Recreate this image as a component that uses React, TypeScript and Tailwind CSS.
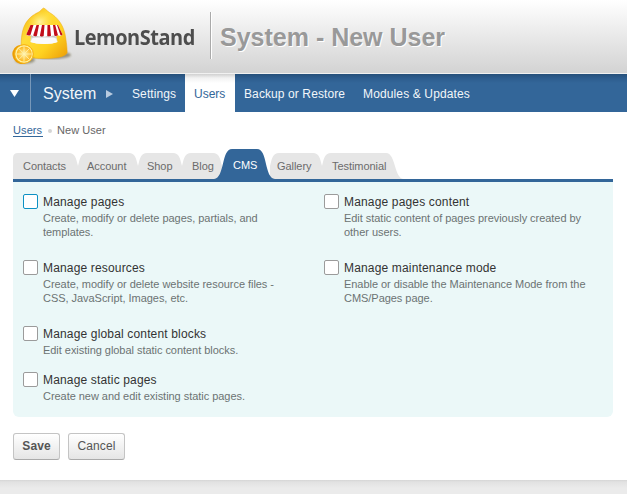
import React from "react";

function Logo() {
  return (
    <svg className="h-[62px] w-[64px] shrink-0" viewBox="10 5 64 62">
      <defs>
        <linearGradient id="dome" x1="0" y1="0" x2="1" y2="1">
          <stop offset="0" stopColor="#f3ae05" />
          <stop offset="0.35" stopColor="#ffdc3a" />
          <stop offset="0.65" stopColor="#ffd322" />
          <stop offset="1" stopColor="#ec9d05" />
        </linearGradient>
        <radialGradient id="glow" cx="0.42" cy="0.35" r="0.3">
          <stop offset="0" stopColor="#fff29c" />
          <stop offset="1" stopColor="#ffe14a" stopOpacity="0" />
        </radialGradient>
        <linearGradient id="counter" x1="0" y1="0" x2="0" y2="1">
          <stop offset="0" stopColor="#b5a89b" />
          <stop offset="0.5" stopColor="#dfe1e4" />
          <stop offset="1" stopColor="#f7f7f7" />
        </linearGradient>
        <radialGradient id="slice">
          <stop offset="0" stopColor="#fff3a8" />
          <stop offset="1" stopColor="#fdb51b" />
        </radialGradient>
        <filter id="soft"><feGaussianBlur stdDeviation="1.3" /></filter>
      </defs>
      <ellipse cx="51" cy="55" rx="20" ry="4" fill="#4d4522" opacity=".5" filter="url(#soft)" />
      <path d="M43.600 8C46 9 47 11 49.500 12.500C58 17.500 63 25 65 34C66.500 42 67.200 49 67.200 52.500C66.500 57 54 58.500 44 58.500C32 58.500 21.500 57 21.200 52C21 43 21 32 25 24.500C28 18.500 33.500 14.500 38 12.500C40.500 11.300 41.500 9 43.600 8Z" fill="url(#dome)" stroke="#eea90c" strokeWidth=".5" />
      <path d="M43.600 9C46 10 47 12 49.500 13.500C57 18.500 62 25 64 34L65 46H22C21.500 38 22.500 29 26 23.500C29 18 34 15 38 13.500C40.500 12.300 41.500 10 43.600 9Z" fill="url(#glow)" />
      <path d="M31 34H56L57.500 42C52 44.600 37 44.600 30.500 42Z" fill="url(#counter)" />
      <path d="M32 39.500Q32 37.500 35 37.500H53Q56 37.500 56 39.500L57.500 42C52 44.600 37 44.600 30.500 42Z" fill="#fafafa" />
      <path d="M30.500 25H58L62.500 34.500Q61 37 58.200 35.300Q55.500 37.300 53 35.600Q50 37.500 47.500 35.800Q44.500 37.600 42 35.800Q39 37.500 36.500 35.600Q33.500 37.300 31.500 35.300Q28 36.800 26.300 34.500Z" fill="#fff" />
      <path d="M30.500 25H33.500L30.400 35.300Q28.200 36.200 26.300 34.500ZM36.500 25H39L36.900 35.800Q35 36.700 33.200 35.500ZM42 25H44.500L43.700 36Q41.500 37 39.900 35.700ZM47.500 25H50L51 35.700Q49 36.800 47.200 35.700ZM53 25H55.200L58 35.300Q56 36.800 54.300 35.500ZM57 25H58L62.500 34.500Q61.500 35.700 60.500 35.300Z" fill="#c20d19" />
      <ellipse cx="25" cy="60" rx="10" ry="3.500" fill="#524a24" opacity=".5" filter="url(#soft)" />
      <ellipse cx="21.500" cy="54.500" rx="9" ry="9.700" fill="#eb9d04" transform="rotate(-28 21.500 54.500)" />
      <circle cx="24" cy="54" r="9.300" fill="#fff0a0" stroke="#f6ad0b" strokeWidth="1" />
      <circle cx="24.200" cy="54" r="7.600" fill="url(#slice)" />
      <path d="M24 46.300V61.700M16.500 54H31.800M18.800 48.500L29.500 59.500M29.500 48.500L18.800 59.500" stroke="#fff4b4" strokeWidth=".8" />
    </svg>
  );
}

type TabProps = { label: string; box: string; width: number; first?: boolean; last?: boolean };

function Tab({ label, box, width: w, first, last }: TabProps) {
  const left = first ? "M0 26V5Q0 0 5 0" : "M0 26V13C2 5 3 0 9 0";
  const right = last
    ? `H${w - 11}C${w - 1} 0 ${w - 3} 26 ${w + 7} 26Z`
    : `H${w - 9}C${w - 3} 0 ${w - 2} 5 ${w} 13V26Z`;
  return (
    <div className={`relative h-[26px] text-[11px] leading-[26px] tracking-[-0.05px] text-[#6b6b6b] ${box}`}>
      <svg className="absolute left-0 top-0 h-[26px] w-full overflow-visible">
        <path d={left + right} fill="#e6e6e6" />
      </svg>
      <span className="relative whitespace-nowrap">{label}</span>
    </div>
  );
}

type PermissionProps = { title: string; lines: string[]; height: string; focused?: boolean };

function Permission({ title, lines, height, focused }: PermissionProps) {
  return (
    <div className={`flex gap-[5px] ${height}`}>
      <div className={`h-[15px] w-[15px] shrink-0 rounded-[2px] border bg-white ${focused ? "border-[#0d91c4]" : "border-[#9b9b9b]"}`} />
      <div className="whitespace-nowrap">
        <div className="text-[12px] leading-[16px] tracking-[0.16px] text-[#333]">{title}</div>
        <div className="pt-px text-[11px] leading-[14px] tracking-[-0.04px] text-[#6b7373]">
          {lines.map((line) => <div key={line}>{line}</div>)}
        </div>
      </div>
    </div>
  );
}

export default function App() {
  return (
    <div className="flex h-[494px] w-[627px] flex-col overflow-hidden bg-white font-['Liberation_Sans',Arial,sans-serif]">
      <header className="flex h-[74px] shrink-0 border-b border-[#f1f1f1] bg-linear-to-b from-white to-[#d3d3d3] pl-[10px]">
        <div className="pt-[5px]"><Logo /></div>
        <div className="w-[136px] origin-left scale-x-[0.95] whitespace-nowrap pt-[22px] font-['Open_Sans',sans-serif] text-[21px] font-bold leading-[30px] tracking-[-0.5px] text-[#4d4d4d]">LemonStand</div>
        <div className="mt-[12px] h-[47px] w-[2px] border-l border-r border-l-[#aaa] border-r-white" />
        <h1 className="pl-[8px] pt-[22px] text-[25px] font-bold leading-[30px] text-[#999] [text-shadow:1px_1px_0_#fff]">System - New User</h1>
      </header>

      <nav className="flex h-[38px] shrink-0 bg-[linear-gradient(#26507a,#2d5c8d_4px,#336699_9px)] text-[12px] leading-[40px] text-[#f2f6fa]">
        <div className="flex w-[31px] justify-center border-r border-[#7898b9] pr-px pt-[16px]">
          <svg className="h-[7px] w-[9px]" viewBox="0 0 9 7"><path d="M0 0H9L4.500 7Z" fill="#fff" /></svg>
        </div>
        <div className="w-[75px] pl-[12px] text-[16px]">System</div>
        <svg className="mt-[16px] h-[8px] w-[7px]" viewBox="0 0 7 8"><path d="M0 0L7 4L0 8Z" fill="#b8cbe0" /></svg>
        <div className="w-[72px] pl-[19px] tracking-[0.1px]">Settings</div>
        <div className="w-[50px] bg-[linear-gradient(#d0d0d0,#f2f2f2_4px,#fff_9px)] pl-[9px] text-[#336699]">Users</div>
        <div className="w-[119px] pl-[9px] tracking-[0.1px]">Backup or Restore</div>
        <div className="whitespace-nowrap pl-[9px] tracking-[0.13px]">Modules &amp; Updates</div>
      </nav>

      <div className="flex h-[37px] shrink-0 items-center pl-[13px] text-[11px] text-[#666]">
        <span className="h-[12px] w-[30px] border-b border-[#336699] leading-[11px] tracking-[0.1px] text-[#336699]">Users</span>
        <span className="ml-[5px] h-[4px] w-[4px] rounded-full bg-[#d5d5d5]" />
        <span className="ml-[5px] tracking-[0.04px]">New User</span>
      </div>

      <main className="w-[613px] shrink-0 pl-[13px]">
        <div className="flex h-[33px] items-end border-b-[3px] border-[#336699]">
          <Tab label="Contacts" width={65} box="w-[65px] pl-[10px]" first />
          <Tab label="Account" width={60} box="w-[60px] pl-[9px]" />
          <Tab label="Shop" width={44} box="w-[44px] pl-[9px]" />
          <Tab label="Blog" width={40} box="w-[40px] pl-[10px]" />
          <div className="relative z-10 h-[30px] w-[48px] pl-[11px] text-[11px] leading-[32px] text-white">
            <svg className="absolute -left-[8px] top-0 h-[30px] w-[63px]" viewBox="0 0 63 30">
              <path d="M0 30C11 29 7 0 18 0H43C54 0 50 29 61 30Z" fill="#336699" />
            </svg>
            <span className="relative">CMS</span>
          </div>
          <Tab label="Gallery" width={52} box="w-[52px] pl-[7px]" />
          <Tab label="Testimonial" width={75} box="w-[75px] pl-[10px]" last />
        </div>

        <section className="flex h-[235px] rounded-b-[6px] bg-[#ebf8f8] pl-[10px] pt-[12px]">
          <div className="w-[301px]">
            <Permission focused height="h-[66px]" title="Manage pages" lines={["Create, modify or delete pages, partials, and", "templates."]} />
            <Permission height="h-[66px]" title="Manage resources" lines={["Create, modify or delete website resource files -", "CSS, JavaScript, Images, etc."]} />
            <Permission height="h-[46px]" title="Manage global content blocks" lines={["Edit existing global static content blocks."]} />
            <Permission height="h-[46px]" title="Manage static pages" lines={["Create new and edit existing static pages."]} />
          </div>
          <div>
            <Permission height="h-[66px]" title="Manage pages content" lines={["Edit static content of pages previously created by", "other users."]} />
            <Permission height="h-[66px]" title="Manage maintenance mode" lines={["Enable or disable the Maintenance Mode from the", "CMS/Pages page."]} />
          </div>
        </section>

        <div className="flex h-[63px] gap-[8px] pt-[16px] text-[12px] leading-[25px] tracking-[0.1px] text-[#555]">
          <button className="h-[27px] w-[47px] rounded-[3px] border border-[#c4c4c4] border-b-[#aaa] bg-linear-to-b from-white to-[#e5e5e5] font-bold">Save</button>
          <button className="h-[27px] w-[57px] rounded-[3px] border border-[#c4c4c4] border-b-[#aaa] bg-linear-to-b from-white to-[#e5e5e5]">Cancel</button>
        </div>
      </main>

      <footer className="flex-1 bg-[linear-gradient(#d5d5d5,#e2e2e2_2px,#ebebeb_8px)]" />
    </div>
  );
}
